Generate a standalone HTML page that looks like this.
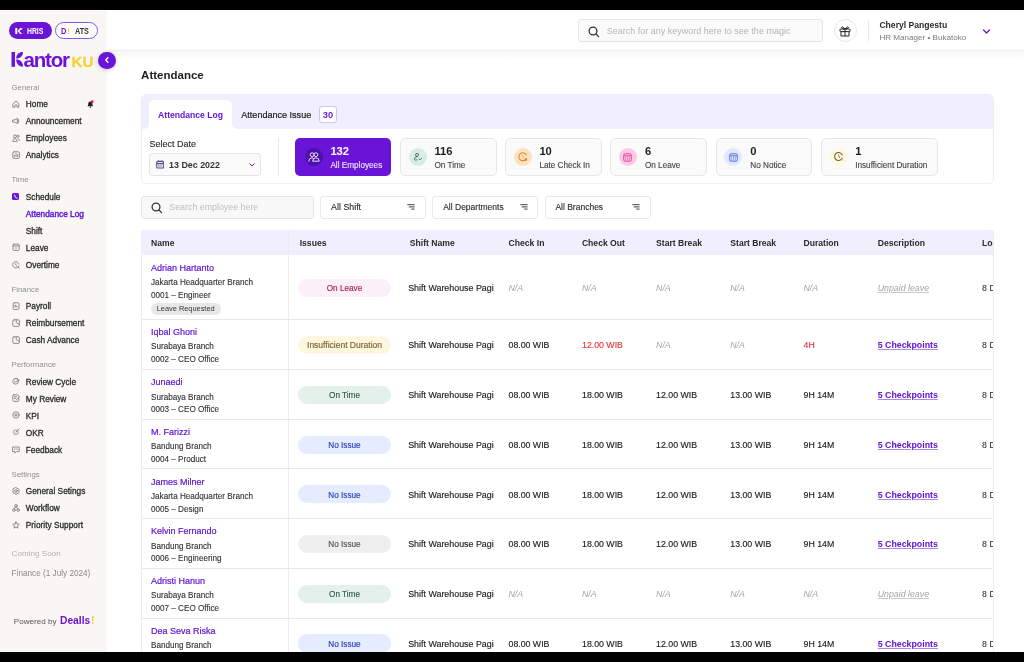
<!DOCTYPE html>
<html><head><meta charset="utf-8">
<style>
*{box-sizing:border-box;margin:0;padding:0}
html,body{width:1024px;height:662px;overflow:hidden;background:#fff;font-family:"Liberation Sans",sans-serif;color:#2b2b2b;position:relative}
.a{position:absolute;white-space:nowrap}
#wrap{position:absolute;left:0;top:0;width:1024px;height:662px;will-change:transform}
</style></head><body><div id="wrap">
<div class="a" style="left:0.00px;top:0.00px;width:1024.00px;height:10.00px;background:#000;z-index:50"></div>
<div class="a" style="left:0.00px;top:652.00px;width:1024.00px;height:10.00px;background:#000;z-index:50"></div>
<div class="a" style="left:0.00px;top:10.00px;width:107.00px;height:642.00px;background:#f8f7f4"></div>
<div class="a" style="left:8.60px;top:22.10px;width:43.20px;height:17.20px;border-radius:9px;background:#6a14d8"></div>
<svg class="a" style="left:15.00px;top:27.50px" width="8" height="7" viewBox="0 0 8 7"><rect x="0.3" y="0" width="2" height="6" fill="#fff"/><path d="M2.6 3 L5.2 0 H7 L4.4 3 L7 6 H5.2 Z" fill="#fff"/><circle cx="6.4" cy="0.9" r="1" fill="#f7d136"/><circle cx="6.8" cy="5.6" r="0.6" fill="#f08a2a"/></svg>
<div class="a" style="left:26.70px;top:26.00px;font-size:8.2px;line-height:12px;font-weight:700;color:#fff;transform:scaleX(0.835);transform-origin:0 0">HRIS</div>
<div class="a" style="left:54.80px;top:22.10px;width:43.00px;height:17.20px;border-radius:9px;border:1px solid #8757e6;background:#fff"></div>
<div class="a" style="left:61.40px;top:25.00px;font-size:8.4px;line-height:12px;font-weight:700;color:#6a14d8;transform:scaleX(0.9);transform-origin:0 0">D</div>
<div class="a" style="left:67.60px;top:27.80px;width:1.20px;height:4.20px;background:#f7c928;border-radius:0.5px"></div>
<div class="a" style="left:67.60px;top:32.70px;width:1.20px;height:1.20px;background:#f7c928"></div>
<div class="a" style="left:74.80px;top:26.00px;font-size:8.2px;line-height:12px;font-weight:700;color:#333;transform:scaleX(0.885);transform-origin:0 0">ATS</div>
<svg class="a" style="left:11.00px;top:51.80px" width="15" height="15" viewBox="0 0 15 15"><rect x="0.5" y="0" width="3.5" height="14.8" fill="#6a14d8"/><path d="M5.2 6.6 C5.2 2.6 7.8 0.1 12 0.1 C12 4.1 9.4 6.6 5.2 6.6 Z" fill="#6a14d8"/><path d="M5.2 7.6 C9.4 7.6 12 10.2 12 14.8 C8 14.8 5.2 11.8 5.2 7.6 Z" fill="#6a14d8"/></svg>
<div class="a" style="left:23.60px;top:48.00px;font-size:20.5px;line-height:24px;font-weight:700;color:#6a14d8;letter-spacing:-1.2px">antor</div>
<div class="a" style="left:71.40px;top:52.00px;font-size:15.2px;line-height:20px;font-weight:700;color:#f7d136;letter-spacing:0.1px;-webkit-text-stroke:0.3px #f7d136">KU</div>
<div class="a" style="left:98.40px;top:51.80px;width:17.20px;height:17.20px;border-radius:50%;background:#6a14d8;box-shadow:0 1px 5px rgba(60,20,120,.22);z-index:10"></div>
<svg class="a" style="left:103px;top:56.3px;z-index:11" width="8" height="8" viewBox="0 0 8 8"><path d="M4.9 1.8 L2.8 4 L4.9 6.2" stroke="#fff" stroke-width="1.4" fill="none" stroke-linecap="round" stroke-linejoin="round"/></svg>
<div class="a" style="left:11.50px;top:82.00px;font-size:7.8px;line-height:12px;font-weight:400;color:#8e8e8e;">General</div>
<div class="a" style="left:25.80px;top:98.00px;font-size:8.3px;line-height:12px;font-weight:400;color:#292929;-webkit-text-stroke:0.28px #292929">Home</div>
<svg class="a" style="left:11.80px;top:99.80px" width="8" height="8" viewBox="0 0 8 8"><path d="M1.2 3.6 L4 1 L6.8 3.6 V7.2 H5 V5.2 Q4 4.4 3 5.2 V7.2 H1.2 Z" stroke="#8c8c8c" stroke-width="1" fill="none" stroke-linecap="round" stroke-linejoin="round"/></svg>
<div class="a" style="left:25.80px;top:115.00px;font-size:8.3px;line-height:12px;font-weight:400;color:#292929;-webkit-text-stroke:0.28px #292929">Announcement</div>
<svg class="a" style="left:11.80px;top:116.85px" width="8" height="8" viewBox="0 0 8 8"><path d="M1 3 H2.6 L5.4 1.4 V6.6 L2.6 5 H1 Z" stroke="#8c8c8c" stroke-width="1" fill="none" stroke-linecap="round" stroke-linejoin="round"/><path d="M6.6 2.6 V5.4" stroke="#8c8c8c" stroke-width="1" fill="none" stroke-linecap="round" stroke-linejoin="round"/></svg>
<div class="a" style="left:25.80px;top:132.00px;font-size:8.3px;line-height:12px;font-weight:400;color:#292929;-webkit-text-stroke:0.28px #292929">Employees</div>
<svg class="a" style="left:11.80px;top:133.90px" width="8" height="8" viewBox="0 0 8 8"><circle cx="3" cy="2.4" r="1.5" stroke="#8c8c8c" stroke-width="1" fill="none" stroke-linecap="round" stroke-linejoin="round"/><path d="M0.8 7.2 Q0.8 4.6 3 4.6 Q5.2 4.6 5.2 7.2 Z" stroke="#8c8c8c" stroke-width="1" fill="none" stroke-linecap="round" stroke-linejoin="round"/><circle cx="5.8" cy="2.2" r="1.1" stroke="#8c8c8c" stroke-width="1" fill="none" stroke-linecap="round" stroke-linejoin="round"/><path d="M6 4.4 Q7.4 4.6 7.4 6.4" stroke="#8c8c8c" stroke-width="1" fill="none" stroke-linecap="round" stroke-linejoin="round"/></svg>
<div class="a" style="left:25.80px;top:149.00px;font-size:8.3px;line-height:12px;font-weight:400;color:#292929;-webkit-text-stroke:0.28px #292929">Analytics</div>
<svg class="a" style="left:11.80px;top:150.95px" width="8" height="8" viewBox="0 0 8 8"><rect x="0.8" y="0.8" width="6.6" height="6.6" rx="1.2" stroke="#8c8c8c" stroke-width="1" fill="none" stroke-linecap="round" stroke-linejoin="round"/><path d="M4 2.4 V5.6 M2.4 4.4 V5.6 M5.6 3.6 V5.6" stroke="#8c8c8c" stroke-width="1" fill="none" stroke-linecap="round" stroke-linejoin="round"/></svg>
<div class="a" style="left:11.50px;top:174.00px;font-size:7.8px;line-height:12px;font-weight:400;color:#8e8e8e;">Time</div>
<div class="a" style="left:25.80px;top:191.00px;font-size:8.3px;line-height:12px;font-weight:400;color:#292929;-webkit-text-stroke:0.28px #292929">Schedule</div>
<div class="a" style="left:12.00px;top:192.80px;width:7.40px;height:7.40px;border-radius:1.6px;background:#6a14d8"></div>
<svg class="a" style="left:12.00px;top:192.80px" width="7.4" height="7.4" viewBox="0 0 7.4 7.4"><path d="M2.6 2 Q2.2 4.6 5.2 5.4" stroke="#fff" stroke-width="0.9" fill="none" stroke-linecap="round"/></svg>
<div class="a" style="left:25.80px;top:208.00px;font-size:8.3px;line-height:12px;font-weight:400;color:#6316d8;-webkit-text-stroke:0.4px #6316d8">Attendance Log</div>
<div class="a" style="left:25.80px;top:225.00px;font-size:8.3px;line-height:12px;font-weight:400;color:#292929;-webkit-text-stroke:0.28px #292929">Shift</div>
<div class="a" style="left:25.80px;top:242.00px;font-size:8.3px;line-height:12px;font-weight:400;color:#292929;-webkit-text-stroke:0.28px #292929">Leave</div>
<svg class="a" style="left:11.80px;top:243.45px" width="8" height="8" viewBox="0 0 8 8"><rect x="1" y="1.2" width="6.2" height="6.2" rx="0.8" stroke="#8c8c8c" stroke-width="1" fill="none" stroke-linecap="round" stroke-linejoin="round"/><path d="M1 3 H7.2 M3.6 5 H4.6" stroke="#8c8c8c" stroke-width="1" fill="none" stroke-linecap="round" stroke-linejoin="round"/></svg>
<div class="a" style="left:25.80px;top:259.00px;font-size:8.3px;line-height:12px;font-weight:400;color:#292929;-webkit-text-stroke:0.28px #292929">Overtime</div>
<svg class="a" style="left:11.80px;top:260.50px" width="8" height="8" viewBox="0 0 8 8"><path d="M6.8 5 A3.2 3.2 0 1 1 7 3.2" stroke="#8c8c8c" stroke-width="1" fill="none" stroke-linecap="round" stroke-linejoin="round"/><path d="M3.8 2.4 V4.2 L5 5" stroke="#8c8c8c" stroke-width="1" fill="none" stroke-linecap="round" stroke-linejoin="round"/><path d="M6.2 6.2 L7.4 7.4" stroke="#8c8c8c" stroke-width="1" fill="none" stroke-linecap="round" stroke-linejoin="round"/></svg>
<div class="a" style="left:11.50px;top:284.00px;font-size:7.8px;line-height:12px;font-weight:400;color:#8e8e8e;">Finance</div>
<div class="a" style="left:25.80px;top:300.00px;font-size:8.3px;line-height:12px;font-weight:400;color:#292929;-webkit-text-stroke:0.28px #292929">Payroll</div>
<svg class="a" style="left:11.80px;top:301.85px" width="8" height="8" viewBox="0 0 8 8"><rect x="1.2" y="0.8" width="5.8" height="6.6" rx="1" stroke="#8c8c8c" stroke-width="1" fill="none" stroke-linecap="round" stroke-linejoin="round"/><path d="M2.8 3.4 H4 M2.8 4.8 H5.4" stroke="#8c8c8c" stroke-width="1" fill="none" stroke-linecap="round" stroke-linejoin="round"/></svg>
<div class="a" style="left:25.80px;top:317.00px;font-size:8.3px;line-height:12px;font-weight:400;color:#292929;-webkit-text-stroke:0.28px #292929">Reimbursement</div>
<svg class="a" style="left:11.80px;top:318.90px" width="8" height="8" viewBox="0 0 8 8"><rect x="0.8" y="0.8" width="6.6" height="6.6" rx="1.2" stroke="#8c8c8c" stroke-width="1" fill="none" stroke-linecap="round" stroke-linejoin="round"/><path d="M4.2 0.8 V3.6 L7.4 5.6" stroke="#8c8c8c" stroke-width="1" fill="none" stroke-linecap="round" stroke-linejoin="round"/></svg>
<div class="a" style="left:25.80px;top:334.00px;font-size:8.3px;line-height:12px;font-weight:400;color:#292929;-webkit-text-stroke:0.28px #292929">Cash Advance</div>
<svg class="a" style="left:11.80px;top:335.95px" width="8" height="8" viewBox="0 0 8 8"><rect x="0.8" y="0.8" width="6.6" height="6.6" rx="1.2" stroke="#8c8c8c" stroke-width="1" fill="none" stroke-linecap="round" stroke-linejoin="round"/><path d="M4.2 0.8 V3.6 L7.4 5.6" stroke="#8c8c8c" stroke-width="1" fill="none" stroke-linecap="round" stroke-linejoin="round"/></svg>
<div class="a" style="left:11.50px;top:359.00px;font-size:7.8px;line-height:12px;font-weight:400;color:#8e8e8e;">Performance</div>
<div class="a" style="left:25.80px;top:376.00px;font-size:8.3px;line-height:12px;font-weight:400;color:#292929;-webkit-text-stroke:0.28px #292929">Review Cycle</div>
<svg class="a" style="left:11.80px;top:377.30px" width="8" height="8" viewBox="0 0 8 8"><circle cx="3.6" cy="4.4" r="2.8" stroke="#8c8c8c" stroke-width="1" fill="none" stroke-linecap="round" stroke-linejoin="round"/><path d="M3 1.4 A3 3 0 0 1 7.2 3.6" stroke="#8c8c8c" stroke-width="1" fill="none" stroke-linecap="round" stroke-linejoin="round"/><path d="M2.4 4.6 L3.4 5.4 L5 3.8" stroke="#8c8c8c" stroke-width="1" fill="none" stroke-linecap="round" stroke-linejoin="round"/></svg>
<div class="a" style="left:25.80px;top:393.00px;font-size:8.3px;line-height:12px;font-weight:400;color:#292929;-webkit-text-stroke:0.28px #292929">My Review</div>
<svg class="a" style="left:11.80px;top:394.35px" width="8" height="8" viewBox="0 0 8 8"><rect x="0.8" y="0.8" width="6" height="6.6" rx="1" stroke="#8c8c8c" stroke-width="1" fill="none" stroke-linecap="round" stroke-linejoin="round"/><path d="M2.4 2.8 H4.6 M2.4 4.4 H3.6 M4.2 6 L7.2 3" stroke="#8c8c8c" stroke-width="1" fill="none" stroke-linecap="round" stroke-linejoin="round"/></svg>
<div class="a" style="left:25.80px;top:410.00px;font-size:8.3px;line-height:12px;font-weight:400;color:#292929;-webkit-text-stroke:0.28px #292929">KPI</div>
<svg class="a" style="left:11.80px;top:411.40px" width="8" height="8" viewBox="0 0 8 8"><circle cx="4" cy="4" r="3.2" stroke="#8c8c8c" stroke-width="1" fill="none" stroke-linecap="round" stroke-linejoin="round"/><path d="M4 2.6 V5.4 M2.6 4 H5.4" stroke="#8c8c8c" stroke-width="1" fill="none" stroke-linecap="round" stroke-linejoin="round"/></svg>
<div class="a" style="left:25.80px;top:427.00px;font-size:8.3px;line-height:12px;font-weight:400;color:#292929;-webkit-text-stroke:0.28px #292929">OKR</div>
<svg class="a" style="left:11.80px;top:428.45px" width="8" height="8" viewBox="0 0 8 8"><circle cx="3.8" cy="4.2" r="3" fill="#8c8c8c" opacity="0.55"/><circle cx="3.8" cy="4.2" r="1.4" fill="#f8f7f4"/><path d="M4 4 L7.2 0.8" stroke="#8c8c8c" stroke-width="1" fill="none" stroke-linecap="round" stroke-linejoin="round"/></svg>
<div class="a" style="left:25.80px;top:444.00px;font-size:8.3px;line-height:12px;font-weight:400;color:#292929;-webkit-text-stroke:0.28px #292929">Feedback</div>
<svg class="a" style="left:11.80px;top:445.50px" width="8" height="8" viewBox="0 0 8 8"><path d="M0.8 1 H7.2 V5.6 H4.6 L3 7.2 V5.6 H0.8 Z" stroke="#8c8c8c" stroke-width="1" fill="none" stroke-linecap="round" stroke-linejoin="round"/><path d="M2.8 2.8 V3.6 M5 2.8 V3.6" stroke="#8c8c8c" stroke-width="1" fill="none" stroke-linecap="round" stroke-linejoin="round"/></svg>
<div class="a" style="left:11.50px;top:469.00px;font-size:7.8px;line-height:12px;font-weight:400;color:#8e8e8e;">Settings</div>
<div class="a" style="left:25.80px;top:485.00px;font-size:8.3px;line-height:12px;font-weight:400;color:#292929;-webkit-text-stroke:0.28px #292929">General Setings</div>
<svg class="a" style="left:11.80px;top:486.85px" width="8" height="8" viewBox="0 0 8 8"><path d="M4 0.6 L7 2.3 V5.7 L4 7.4 L1 5.7 V2.3 Z" stroke="#8c8c8c" stroke-width="1" fill="none" stroke-linecap="round" stroke-linejoin="round"/><circle cx="4" cy="4" r="1.3" stroke="#8c8c8c" stroke-width="1" fill="none" stroke-linecap="round" stroke-linejoin="round"/></svg>
<div class="a" style="left:25.80px;top:502.00px;font-size:8.3px;line-height:12px;font-weight:400;color:#292929;-webkit-text-stroke:0.28px #292929">Workflow</div>
<svg class="a" style="left:11.80px;top:503.90px" width="8" height="8" viewBox="0 0 8 8"><circle cx="4" cy="1.8" r="1.3" stroke="#8c8c8c" stroke-width="1" fill="none" stroke-linecap="round" stroke-linejoin="round"/><circle cx="1.9" cy="6" r="1.3" stroke="#8c8c8c" stroke-width="1" fill="none" stroke-linecap="round" stroke-linejoin="round"/><circle cx="6.1" cy="6" r="1.3" stroke="#8c8c8c" stroke-width="1" fill="none" stroke-linecap="round" stroke-linejoin="round"/><path d="M3.3 2.9 L2.4 4.8 M4.7 2.9 L5.6 4.8" stroke="#8c8c8c" stroke-width="1" fill="none" stroke-linecap="round" stroke-linejoin="round"/></svg>
<div class="a" style="left:25.80px;top:519.00px;font-size:8.3px;line-height:12px;font-weight:400;color:#292929;-webkit-text-stroke:0.28px #292929">Priority Support</div>
<svg class="a" style="left:11.80px;top:520.95px" width="8" height="8" viewBox="0 0 8 8"><path d="M4 0.8 L5 3 L7.3 3.2 L5.5 4.8 L6 7.2 L4 6 L2 7.2 L2.5 4.8 L0.7 3.2 L3 3 Z" stroke="#8c8c8c" stroke-width="1" fill="none" stroke-linecap="round" stroke-linejoin="round"/></svg>
<svg class="a" style="left:86.60px;top:99.60px" width="7.5" height="8.4" viewBox="0 0 7.5 8.4"><path d="M0.4 6.2 Q1.2 5.6 1.2 3.8 Q1.2 1.5 3.3 1.5 Q5.4 1.5 5.4 3.8 Q5.4 5.6 6.2 6.2 Z" fill="#232323"/><rect x="2.6" y="6.3" width="1.4" height="1.6" rx="0.6" fill="#444"/><circle cx="5.2" cy="1.7" r="1.45" fill="#e02020"/></svg>
<div class="a" style="left:11.60px;top:548.00px;font-size:8.1px;line-height:12px;font-weight:400;color:#b3b3b3;">Coming Soon</div>
<div class="a" style="left:11.60px;top:568.00px;font-size:8.2px;line-height:12px;font-weight:400;color:#8a8a8a;">Finance (1 July 2024)</div>
<div class="a" style="left:13.80px;top:616.00px;font-size:8.1px;line-height:12px;font-weight:400;color:#555;">Powered by</div>
<div class="a" style="left:60.00px;top:614.00px;font-size:10.25px;line-height:14px;font-weight:700;color:#6a14d8;">Dealls</div>
<div class="a" style="left:91.00px;top:614.00px;font-size:10.25px;line-height:14px;font-weight:700;color:#f7c928;">!</div>
<div class="a" style="left:107.00px;top:10.00px;width:917.00px;height:40.00px;background:#fff"></div>
<div class="a" style="left:107.00px;top:50.00px;width:917.00px;height:1.00px;background:#efefef"></div>
<div class="a" style="left:107.00px;top:51.00px;width:917.00px;height:8.00px;background:linear-gradient(#f6f6f6,rgba(255,255,255,0))"></div>
<div class="a" style="left:577.60px;top:19.40px;width:245.00px;height:23.00px;border:1px solid #e2e5ea;border-radius:3px;background:#fafafa"></div>
<svg class="a" style="left:587.50px;top:25.50px" width="12" height="12" viewBox="0 0 12 12"><circle cx="5" cy="5" r="3.9" stroke="#333" stroke-width="1.3" fill="none"/><path d="M8 8 L10.6 10.6" stroke="#333" stroke-width="1.3" stroke-linecap="round"/></svg>
<div class="a" style="left:606.80px;top:25.00px;font-size:9.0px;line-height:12px;font-weight:400;color:#b5b5b5;">Search for any keyword here to see the magic</div>
<div class="a" style="left:833.60px;top:19.30px;width:23.00px;height:23.00px;border-radius:50%;border:1px solid #e1e6ee;background:#fff"></div>
<svg class="a" style="left:839.00px;top:24.50px" width="12" height="12" viewBox="0 0 12 12"><rect x="1" y="4" width="10" height="2.6" stroke="#222" stroke-width="1" fill="none" rx="0.5"/><path d="M2 6.6 V11 H10 V6.6 M6 4 V11" stroke="#222" stroke-width="1" fill="none"/><path d="M6 4 Q3 0.5 2.6 2.6 Q2.6 4 6 4 Q9.4 4 9.4 2.6 Q9 0.5 6 4" stroke="#222" stroke-width="1" fill="none"/></svg>
<div class="a" style="left:868.00px;top:19.70px;width:1.00px;height:21.50px;background:#e8e8e8"></div>
<div class="a" style="left:879.40px;top:19.00px;font-size:8.6px;line-height:12px;font-weight:700;color:#2b2b2b;">Cheryl Pangestu</div>
<div class="a" style="left:879.40px;top:32.00px;font-size:8.1px;line-height:12px;font-weight:400;color:#7c7c7c;">HR Manager • Bukatoko</div>
<svg class="a" style="left:981.50px;top:27.50px" width="9" height="7" viewBox="0 0 9 7"><path d="M1.5 2 L4.5 5 L7.5 2" stroke="#6a14d8" stroke-width="1.3" fill="none" stroke-linecap="round" stroke-linejoin="round"/></svg>
<div class="a" style="left:141.10px;top:68.00px;font-size:11.5px;line-height:14px;font-weight:700;color:#1f1f1f;">Attendance</div>
<div class="a" style="left:141.00px;top:94.00px;width:852.80px;height:90.00px;border:1px solid #ededf0;border-radius:5px;background:#fff;overflow:hidden"></div>
<div class="a" style="left:141.50px;top:94.50px;width:851.80px;height:10.00px;background:#f1effd;border-radius:4.5px 4.5px 0 0"></div>
<div class="a" style="left:142.00px;top:99.50px;width:7.30px;height:29.70px;background:#f1effd;border-radius:0 0 5px 0"></div>
<div class="a" style="left:232.30px;top:99.50px;width:761.00px;height:29.70px;background:#f1effd;border-radius:0 0 0 5px"></div>
<div class="a" style="left:149.30px;top:99.80px;width:83.00px;height:29.40px;background:#fff;border-radius:5px 5px 0 0"></div>
<div class="a" style="left:158.10px;top:109.00px;font-size:8.6px;line-height:12px;font-weight:700;color:#6216d6;">Attendance Log</div>
<div class="a" style="left:241.30px;top:109.00px;font-size:9.05px;line-height:12px;font-weight:400;color:#222;-webkit-text-stroke:0.2px #222">Attendance Issue</div>
<div class="a" style="left:319.00px;top:106.20px;width:18.00px;height:17.20px;border:1px solid #cfc4f5;border-radius:3px;background:#fff"></div>
<div class="a" style="left:319.00px;top:109.00px;font-size:9.3px;line-height:12px;font-weight:700;color:#6a1fd8;width:18px;text-align:center">30</div>
<div class="a" style="left:149.40px;top:138.00px;font-size:9.0px;line-height:12px;font-weight:400;color:#2a2a2a;-webkit-text-stroke:0.12px #2a2a2a">Select Date</div>
<div class="a" style="left:149.00px;top:153.10px;width:111.80px;height:22.60px;border:1px solid #e5e5e5;border-radius:3px;background:#fafafa"></div>
<svg class="a" style="left:155.80px;top:160.40px" width="8.4" height="8.6" viewBox="0 0 8.4 8.6"><rect x="0.7" y="1.4" width="7" height="6.6" rx="1" stroke="#5b4a8a" stroke-width="1.1" fill="none"/><path d="M0.7 3.6 H7.7" stroke="#5b4a8a" stroke-width="1.3"/><path d="M2.6 0.3 V2 M5.8 0.3 V2" stroke="#5b4a8a" stroke-width="0.9"/><rect x="2" y="4.6" width="4.4" height="2.4" fill="#5b4a8a" opacity="0.35"/></svg>
<div class="a" style="left:169.10px;top:159.00px;font-size:8.9px;line-height:12px;font-weight:700;color:#333;">13 Dec 2022</div>
<svg class="a" style="left:248.50px;top:162.50px" width="6" height="4" viewBox="0 0 6 4"><path d="M0.8 0.8 L3 3 L5.2 0.8" stroke="#6a14d8" stroke-width="1" fill="none" stroke-linecap="round" stroke-linejoin="round"/></svg>
<div class="a" style="left:278.00px;top:138.30px;width:1.00px;height:37.40px;background:#e8e8e8"></div>
<div class="a" style="left:295.00px;top:138.30px;width:96.40px;height:37.40px;border-radius:5px;background:#6a14d8"></div>
<div class="a" style="left:304.90px;top:148.00px;width:18.20px;height:18.20px;border-radius:50%;background:#4f10a8"></div>
<svg class="a" style="left:308.00px;top:152.10px" width="12" height="10" viewBox="0 0 12 10"><circle cx="4.1" cy="2.7" r="1.9" stroke="#eadfff" stroke-width="1" fill="none"/><circle cx="7.9" cy="2.7" r="1.9" stroke="#eadfff" stroke-width="1" fill="none"/><path d="M0.8 9.2 Q0.8 5.8 4 5.8 Q5.2 5.8 5.8 6.6" stroke="#eadfff" stroke-width="1" fill="none" stroke-linecap="round"/><path d="M4.6 9.2 Q4.6 5.8 7.9 5.8 Q11.2 5.8 11.2 9.2 Z" stroke="#eadfff" stroke-width="1" fill="none" stroke-linejoin="round"/></svg>
<div class="a" style="left:330.40px;top:144.00px;font-size:11.2px;line-height:14px;font-weight:700;color:#fff;">132</div>
<div class="a" style="left:330.40px;top:160.00px;font-size:8.2px;line-height:12px;font-weight:400;color:#f0e8ff;-webkit-text-stroke:0.12px #f0e8ff">All Employees</div>
<div class="a" style="left:400.10px;top:138.30px;width:96.60px;height:37.40px;border:1px solid #e6e6e6;border-radius:5px;background:#fafafa"></div>
<div class="a" style="left:408.70px;top:148.00px;width:18.20px;height:18.20px;border-radius:50%;background:#d5ede3"></div>
<svg class="a" style="left:412.80px;top:153.10px" width="10" height="8" viewBox="0 0 10 8"><circle cx="4" cy="1.9" r="1.5" stroke="#3c6b55" stroke-width="0.9" fill="none"/><path d="M4 3.6 Q1 4.4 1.4 6.4 Q2 7.6 4 7 M6 6 L7 6.8 L8.6 5.2" stroke="#3c6b55" stroke-width="0.9" fill="none" stroke-linecap="round"/></svg>
<div class="a" style="left:434.40px;top:144.00px;font-size:11.2px;line-height:14px;font-weight:700;color:#1f1f1f;">116</div>
<div class="a" style="left:434.40px;top:160.00px;font-size:8.2px;line-height:12px;font-weight:400;color:#444;-webkit-text-stroke:0.12px #444">On Time</div>
<div class="a" style="left:505.20px;top:138.30px;width:96.40px;height:37.40px;border:1px solid #e6e6e6;border-radius:5px;background:#fafafa"></div>
<div class="a" style="left:513.80px;top:148.00px;width:18.20px;height:18.20px;border-radius:50%;background:#fde3bd"></div>
<svg class="a" style="left:518.20px;top:152.20px" width="10" height="10" viewBox="0 0 10 10"><path d="M8.6 6.2 A4 4 0 1 1 8.6 3.4" stroke="#d9882c" stroke-width="1.1" fill="none"/><path d="M4.6 2.6 Q4.6 4.8 6.2 6.4" stroke="#e8b050" stroke-width="1" fill="none"/><rect x="6.8" y="6.6" width="2" height="2" fill="#d07a20"/></svg>
<div class="a" style="left:539.40px;top:144.00px;font-size:11.2px;line-height:14px;font-weight:700;color:#1f1f1f;">10</div>
<div class="a" style="left:539.40px;top:160.00px;font-size:8.2px;line-height:12px;font-weight:400;color:#444;-webkit-text-stroke:0.12px #444">Late Check In</div>
<div class="a" style="left:610.20px;top:138.30px;width:96.40px;height:37.40px;border:1px solid #e6e6e6;border-radius:5px;background:#fafafa"></div>
<div class="a" style="left:618.80px;top:148.00px;width:18.20px;height:18.20px;border-radius:50%;background:#fcc9e8"></div>
<svg class="a" style="left:623.40px;top:152.60px" width="9" height="9" viewBox="0 0 9 9"><rect x="0.7" y="0.8" width="7.6" height="7.4" rx="1.3" stroke="#df4f98" stroke-width="1" fill="none"/><path d="M0.7 2.8 H8.3" stroke="#df4f98" stroke-width="1"/><path d="M2.6 3.4 V7.6 M4.5 3.4 V7.6 M6.4 3.4 V7.6" stroke="#df4f98" stroke-width="0.7" opacity="0.8"/></svg>
<div class="a" style="left:644.90px;top:144.00px;font-size:11.2px;line-height:14px;font-weight:700;color:#1f1f1f;">6</div>
<div class="a" style="left:644.90px;top:160.00px;font-size:8.2px;line-height:12px;font-weight:400;color:#444;-webkit-text-stroke:0.12px #444">On Leave</div>
<div class="a" style="left:715.70px;top:138.30px;width:96.30px;height:37.40px;border:1px solid #e6e6e6;border-radius:5px;background:#fafafa"></div>
<div class="a" style="left:724.30px;top:148.00px;width:18.20px;height:18.20px;border-radius:50%;background:#e1e8fd"></div>
<svg class="a" style="left:728.90px;top:152.60px" width="9" height="9" viewBox="0 0 9 9"><rect x="0.7" y="0.8" width="7.6" height="7.4" rx="1.3" stroke="#5a76d6" stroke-width="1" fill="none"/><path d="M0.7 2.8 H8.3" stroke="#5a76d6" stroke-width="1"/><path d="M2.6 3.4 V7.6 M4.5 3.4 V7.6 M6.4 3.4 V7.6" stroke="#5a76d6" stroke-width="0.7" opacity="0.8"/></svg>
<div class="a" style="left:750.30px;top:144.00px;font-size:11.2px;line-height:14px;font-weight:700;color:#1f1f1f;">0</div>
<div class="a" style="left:750.30px;top:160.00px;font-size:8.2px;line-height:12px;font-weight:400;color:#444;-webkit-text-stroke:0.12px #444">No Notice</div>
<div class="a" style="left:821.00px;top:138.30px;width:116.90px;height:37.40px;border:1px solid #e6e6e6;border-radius:5px;background:#fafafa"></div>
<div class="a" style="left:829.60px;top:148.00px;width:18.20px;height:18.20px;border-radius:50%;background:#fdf8e3"></div>
<svg class="a" style="left:833.90px;top:152.20px" width="10" height="10" viewBox="0 0 10 10"><path d="M8.4 5.8 A4 4 0 1 1 8.4 3.2" stroke="#7f6c2c" stroke-width="1.1" fill="none"/><path d="M4.6 2.6 Q4.4 4.6 5.8 6" stroke="#7f6c2c" stroke-width="0.9" fill="none"/><path d="M7.8 6.2 V8.6" stroke="#b9a868" stroke-width="0.9"/></svg>
<div class="a" style="left:855.20px;top:144.00px;font-size:11.2px;line-height:14px;font-weight:700;color:#1f1f1f;">1</div>
<div class="a" style="left:855.20px;top:160.00px;font-size:8.2px;line-height:12px;font-weight:400;color:#444;-webkit-text-stroke:0.12px #444">Insufficient Duration</div>
<div class="a" style="left:141.00px;top:196.30px;width:173.00px;height:22.30px;border:1px solid #e6e6e6;border-radius:3px;background:#f8f8f8"></div>
<svg class="a" style="left:150.50px;top:201.80px" width="12" height="12" viewBox="0 0 12 12"><circle cx="5" cy="5" r="3.9" stroke="#333" stroke-width="1.3" fill="none"/><path d="M8 8 L10.6 10.6" stroke="#333" stroke-width="1.3" stroke-linecap="round"/></svg>
<div class="a" style="left:169.30px;top:201.00px;font-size:8.85px;line-height:12px;font-weight:400;color:#bdbdbd;">Search employee here</div>
<div class="a" style="left:320.20px;top:196.30px;width:106.20px;height:22.30px;border:1px solid #e8e8e8;border-radius:3px;background:#fff"></div>
<div class="a" style="left:331.10px;top:201.00px;font-size:8.85px;line-height:12px;font-weight:400;color:#2a2a2a;-webkit-text-stroke:0.12px #2a2a2a">All Shift</div>
<svg class="a" style="left:407.40px;top:204.30px" width="8" height="6" viewBox="0 0 8 6"><path d="M0.3 0.7 H7.6 M1.8 2.9 H7.6 M4.2 5.1 H7.6" stroke="#444" stroke-width="1"/></svg>
<div class="a" style="left:432.30px;top:196.30px;width:106.20px;height:22.30px;border:1px solid #e8e8e8;border-radius:3px;background:#fff"></div>
<div class="a" style="left:443.20px;top:201.00px;font-size:8.5px;line-height:12px;font-weight:400;color:#2a2a2a;-webkit-text-stroke:0.12px #2a2a2a">All Departments</div>
<svg class="a" style="left:519.50px;top:204.30px" width="8" height="6" viewBox="0 0 8 6"><path d="M0.3 0.7 H7.6 M1.8 2.9 H7.6 M4.2 5.1 H7.6" stroke="#444" stroke-width="1"/></svg>
<div class="a" style="left:544.50px;top:196.30px;width:106.20px;height:22.30px;border:1px solid #e8e8e8;border-radius:3px;background:#fff"></div>
<div class="a" style="left:555.40px;top:201.00px;font-size:8.5px;line-height:12px;font-weight:400;color:#2a2a2a;-webkit-text-stroke:0.12px #2a2a2a">All Branches</div>
<svg class="a" style="left:631.70px;top:204.30px" width="8" height="6" viewBox="0 0 8 6"><path d="M0.3 0.7 H7.6 M1.8 2.9 H7.6 M4.2 5.1 H7.6" stroke="#444" stroke-width="1"/></svg>
<div class="a" style="left:141.00px;top:230.00px;width:853.00px;height:430.00px;border:1px solid #ececec;border-radius:2px 2px 0 0;overflow:hidden;background:#fff"></div>
<div class="a" style="left:141.00px;top:230.00px;width:852.00px;height:25.20px;background:#f1effd;border-radius:2px 2px 0 0"></div>
<div class="a" style="left:288.30px;top:231.00px;width:1.00px;height:421.00px;background:#ececec"></div>
<div class="a" style="left:151.10px;top:237.00px;font-size:8.6px;line-height:12px;font-weight:700;color:#2a2a2a;">Name</div>
<div class="a" style="left:299.70px;top:237.00px;font-size:8.6px;line-height:12px;font-weight:700;color:#2a2a2a;">Issues</div>
<div class="a" style="left:409.80px;top:237.00px;font-size:8.6px;line-height:12px;font-weight:700;color:#2a2a2a;">Shift Name</div>
<div class="a" style="left:508.60px;top:237.00px;font-size:8.6px;line-height:12px;font-weight:700;color:#2a2a2a;">Check In</div>
<div class="a" style="left:581.90px;top:237.00px;font-size:8.6px;line-height:12px;font-weight:700;color:#2a2a2a;">Check Out</div>
<div class="a" style="left:656.10px;top:237.00px;font-size:8.6px;line-height:12px;font-weight:700;color:#2a2a2a;">Start Break</div>
<div class="a" style="left:730.30px;top:237.00px;font-size:8.6px;line-height:12px;font-weight:700;color:#2a2a2a;">Start Break</div>
<div class="a" style="left:803.50px;top:237.00px;font-size:8.6px;line-height:12px;font-weight:700;color:#2a2a2a;">Duration</div>
<div class="a" style="left:877.70px;top:237.00px;font-size:8.6px;line-height:12px;font-weight:700;color:#2a2a2a;">Description</div>
<div class="a" style="left:982.10px;top:237.00px;font-size:8.6px;line-height:12px;font-weight:700;color:#2a2a2a;width:11.2px;overflow:hidden">Log</div>
<div class="a" style="left:151.00px;top:262.00px;font-size:9.0px;line-height:12px;font-weight:400;color:#6216d6;-webkit-text-stroke:0.2px #6216d6">Adrian Hartanto</div>
<div class="a" style="left:151.00px;top:277.00px;font-size:8.15px;line-height:12px;font-weight:400;color:#333;-webkit-text-stroke:0.12px #333">Jakarta Headquarter Branch</div>
<div class="a" style="left:151.00px;top:290.00px;font-size:8.15px;line-height:12px;font-weight:400;color:#333;-webkit-text-stroke:0.12px #333">0001 – Engineer</div>
<div class="a" style="left:151.00px;top:302.50px;width:69.70px;height:12.00px;border-radius:6px;background:#e7e7e7"></div>
<div class="a" style="left:156.70px;top:303.00px;font-size:7.4px;line-height:12px;font-weight:400;color:#333;">Leave Requested</div>
<div class="a" style="left:298.00px;top:278.75px;width:93.00px;height:18.20px;border-radius:9px;background:#fdeff9"></div>
<div class="a" style="left:298.00px;top:283.00px;font-size:8.2px;line-height:12px;font-weight:400;color:#a8235a;width:93px;text-align:center;-webkit-text-stroke:0.15px #a8235a">On Leave</div>
<div class="a" style="left:408.20px;top:282.00px;font-size:8.9px;line-height:12px;font-weight:400;color:#222;width:86px;overflow:hidden;-webkit-text-stroke:0.15px #222">Shift Warehouse Pagi</div>
<div class="a" style="left:508.50px;top:282.00px;font-size:8.76px;line-height:12px;font-weight:400;color:#a3a3a3;font-style:italic">N/A</div>
<div class="a" style="left:582.00px;top:282.00px;font-size:8.76px;line-height:12px;font-weight:400;color:#a3a3a3;font-style:italic">N/A</div>
<div class="a" style="left:656.10px;top:282.00px;font-size:8.76px;line-height:12px;font-weight:400;color:#a3a3a3;font-style:italic">N/A</div>
<div class="a" style="left:730.30px;top:282.00px;font-size:8.76px;line-height:12px;font-weight:400;color:#a3a3a3;font-style:italic">N/A</div>
<div class="a" style="left:803.50px;top:282.00px;font-size:8.76px;line-height:12px;font-weight:400;color:#a3a3a3;font-style:italic">N/A</div>
<div class="a" style="left:877.70px;top:282.00px;font-size:8.8px;line-height:12px;font-weight:400;color:#a3a3a3;font-style:italic;text-decoration:underline;text-decoration-color:#c8c8c8">Unpaid leave</div>
<div class="a" style="left:982.10px;top:282.00px;font-size:8.8px;line-height:12px;font-weight:400;color:#222;width:10.9px;overflow:hidden">8 Days</div>
<div class="a" style="left:142.00px;top:318.80px;width:850.00px;height:1.00px;background:#e8e8e8"></div>
<div class="a" style="left:151.00px;top:326.00px;font-size:9.0px;line-height:12px;font-weight:400;color:#6216d6;-webkit-text-stroke:0.2px #6216d6">Iqbal Ghoni</div>
<div class="a" style="left:151.00px;top:341.00px;font-size:8.15px;line-height:12px;font-weight:400;color:#333;-webkit-text-stroke:0.12px #333">Surabaya Branch</div>
<div class="a" style="left:151.00px;top:354.00px;font-size:8.15px;line-height:12px;font-weight:400;color:#333;-webkit-text-stroke:0.12px #333">0002 – CEO Office</div>
<div class="a" style="left:298.00px;top:335.90px;width:93.00px;height:18.20px;border-radius:9px;background:#fdf6e0"></div>
<div class="a" style="left:298.00px;top:339.00px;font-size:8.5px;line-height:12px;font-weight:400;color:#7b6528;width:93px;text-align:center;-webkit-text-stroke:0.15px #7b6528">Insufficient Duration</div>
<div class="a" style="left:408.20px;top:339.00px;font-size:8.9px;line-height:12px;font-weight:400;color:#222;width:86px;overflow:hidden;-webkit-text-stroke:0.15px #222">Shift Warehouse Pagi</div>
<div class="a" style="left:508.50px;top:339.00px;font-size:8.78px;line-height:12px;font-weight:400;color:#222;-webkit-text-stroke:0.15px #222">08.00 WIB</div>
<div class="a" style="left:582.00px;top:339.00px;font-size:8.78px;line-height:12px;font-weight:400;color:#e0333a;-webkit-text-stroke:0.12px #e0333a">12.00 WIB</div>
<div class="a" style="left:656.10px;top:339.00px;font-size:8.76px;line-height:12px;font-weight:400;color:#a3a3a3;font-style:italic">N/A</div>
<div class="a" style="left:730.30px;top:339.00px;font-size:8.76px;line-height:12px;font-weight:400;color:#a3a3a3;font-style:italic">N/A</div>
<div class="a" style="left:803.50px;top:339.00px;font-size:8.78px;line-height:12px;font-weight:400;color:#e0333a;-webkit-text-stroke:0.12px #e0333a">4H</div>
<div class="a" style="left:877.70px;top:339.00px;font-size:8.82px;line-height:12px;font-weight:700;color:#6216d6;text-decoration:underline;text-decoration-color:#a98ae8">5 Checkpoints</div>
<div class="a" style="left:982.10px;top:339.00px;font-size:8.8px;line-height:12px;font-weight:400;color:#222;width:10.9px;overflow:hidden">8 Days</div>
<div class="a" style="left:142.00px;top:369.00px;width:850.00px;height:1.00px;background:#e8e8e8"></div>
<div class="a" style="left:151.00px;top:376.00px;font-size:9.0px;line-height:12px;font-weight:400;color:#6216d6;-webkit-text-stroke:0.2px #6216d6">Junaedi</div>
<div class="a" style="left:151.00px;top:392.00px;font-size:8.15px;line-height:12px;font-weight:400;color:#333;-webkit-text-stroke:0.12px #333">Surabaya Branch</div>
<div class="a" style="left:151.00px;top:404.00px;font-size:8.15px;line-height:12px;font-weight:400;color:#333;-webkit-text-stroke:0.12px #333">0003 – CEO Office</div>
<div class="a" style="left:298.00px;top:385.85px;width:93.00px;height:18.20px;border-radius:9px;background:#e3f1ea"></div>
<div class="a" style="left:298.00px;top:390.00px;font-size:8.2px;line-height:12px;font-weight:400;color:#2f5d45;width:93px;text-align:center;-webkit-text-stroke:0.15px #2f5d45">On Time</div>
<div class="a" style="left:408.20px;top:389.00px;font-size:8.9px;line-height:12px;font-weight:400;color:#222;width:86px;overflow:hidden;-webkit-text-stroke:0.15px #222">Shift Warehouse Pagi</div>
<div class="a" style="left:508.50px;top:389.00px;font-size:8.78px;line-height:12px;font-weight:400;color:#222;-webkit-text-stroke:0.15px #222">08.00 WIB</div>
<div class="a" style="left:582.00px;top:389.00px;font-size:8.78px;line-height:12px;font-weight:400;color:#222;-webkit-text-stroke:0.15px #222">18.00 WIB</div>
<div class="a" style="left:656.10px;top:389.00px;font-size:8.78px;line-height:12px;font-weight:400;color:#222;-webkit-text-stroke:0.15px #222">12.00 WIB</div>
<div class="a" style="left:730.30px;top:389.00px;font-size:8.78px;line-height:12px;font-weight:400;color:#222;-webkit-text-stroke:0.15px #222">13.00 WIB</div>
<div class="a" style="left:803.50px;top:389.00px;font-size:8.78px;line-height:12px;font-weight:400;color:#222;-webkit-text-stroke:0.15px #222">9H 14M</div>
<div class="a" style="left:877.70px;top:389.00px;font-size:8.82px;line-height:12px;font-weight:700;color:#6216d6;text-decoration:underline;text-decoration-color:#a98ae8">5 Checkpoints</div>
<div class="a" style="left:982.10px;top:389.00px;font-size:8.8px;line-height:12px;font-weight:400;color:#222;width:10.9px;overflow:hidden">8 Days</div>
<div class="a" style="left:142.00px;top:418.70px;width:850.00px;height:1.00px;background:#e8e8e8"></div>
<div class="a" style="left:151.00px;top:426.00px;font-size:9.0px;line-height:12px;font-weight:400;color:#6216d6;-webkit-text-stroke:0.2px #6216d6">M. Farizzi</div>
<div class="a" style="left:151.00px;top:441.00px;font-size:8.15px;line-height:12px;font-weight:400;color:#333;-webkit-text-stroke:0.12px #333">Bandung Branch</div>
<div class="a" style="left:151.00px;top:454.00px;font-size:8.15px;line-height:12px;font-weight:400;color:#333;-webkit-text-stroke:0.12px #333">0004 – Product</div>
<div class="a" style="left:298.00px;top:435.55px;width:93.00px;height:18.20px;border-radius:9px;background:#e5ecfd"></div>
<div class="a" style="left:298.00px;top:440.00px;font-size:8.2px;line-height:12px;font-weight:400;color:#2b40bd;width:93px;text-align:center;-webkit-text-stroke:0.15px #2b40bd">No Issue</div>
<div class="a" style="left:408.20px;top:439.00px;font-size:8.9px;line-height:12px;font-weight:400;color:#222;width:86px;overflow:hidden;-webkit-text-stroke:0.15px #222">Shift Warehouse Pagi</div>
<div class="a" style="left:508.50px;top:439.00px;font-size:8.78px;line-height:12px;font-weight:400;color:#222;-webkit-text-stroke:0.15px #222">08.00 WIB</div>
<div class="a" style="left:582.00px;top:439.00px;font-size:8.78px;line-height:12px;font-weight:400;color:#222;-webkit-text-stroke:0.15px #222">18.00 WIB</div>
<div class="a" style="left:656.10px;top:439.00px;font-size:8.78px;line-height:12px;font-weight:400;color:#222;-webkit-text-stroke:0.15px #222">12.00 WIB</div>
<div class="a" style="left:730.30px;top:439.00px;font-size:8.78px;line-height:12px;font-weight:400;color:#222;-webkit-text-stroke:0.15px #222">13.00 WIB</div>
<div class="a" style="left:803.50px;top:439.00px;font-size:8.78px;line-height:12px;font-weight:400;color:#222;-webkit-text-stroke:0.15px #222">9H 14M</div>
<div class="a" style="left:877.70px;top:439.00px;font-size:8.82px;line-height:12px;font-weight:700;color:#6216d6;text-decoration:underline;text-decoration-color:#a98ae8">5 Checkpoints</div>
<div class="a" style="left:982.10px;top:439.00px;font-size:8.8px;line-height:12px;font-weight:400;color:#222;width:10.9px;overflow:hidden">8 Days</div>
<div class="a" style="left:142.00px;top:468.40px;width:850.00px;height:1.00px;background:#e8e8e8"></div>
<div class="a" style="left:151.00px;top:476.00px;font-size:9.0px;line-height:12px;font-weight:400;color:#6216d6;-webkit-text-stroke:0.2px #6216d6">James Milner</div>
<div class="a" style="left:151.00px;top:491.00px;font-size:8.15px;line-height:12px;font-weight:400;color:#333;-webkit-text-stroke:0.12px #333">Jakarta Headquarter Branch</div>
<div class="a" style="left:151.00px;top:504.00px;font-size:8.15px;line-height:12px;font-weight:400;color:#333;-webkit-text-stroke:0.12px #333">0005 – Design</div>
<div class="a" style="left:298.00px;top:485.25px;width:93.00px;height:18.20px;border-radius:9px;background:#e5ecfd"></div>
<div class="a" style="left:298.00px;top:490.00px;font-size:8.2px;line-height:12px;font-weight:400;color:#2b40bd;width:93px;text-align:center;-webkit-text-stroke:0.15px #2b40bd">No Issue</div>
<div class="a" style="left:408.20px;top:489.00px;font-size:8.9px;line-height:12px;font-weight:400;color:#222;width:86px;overflow:hidden;-webkit-text-stroke:0.15px #222">Shift Warehouse Pagi</div>
<div class="a" style="left:508.50px;top:489.00px;font-size:8.78px;line-height:12px;font-weight:400;color:#222;-webkit-text-stroke:0.15px #222">08.00 WIB</div>
<div class="a" style="left:582.00px;top:489.00px;font-size:8.78px;line-height:12px;font-weight:400;color:#222;-webkit-text-stroke:0.15px #222">18.00 WIB</div>
<div class="a" style="left:656.10px;top:489.00px;font-size:8.78px;line-height:12px;font-weight:400;color:#222;-webkit-text-stroke:0.15px #222">12.00 WIB</div>
<div class="a" style="left:730.30px;top:489.00px;font-size:8.78px;line-height:12px;font-weight:400;color:#222;-webkit-text-stroke:0.15px #222">13.00 WIB</div>
<div class="a" style="left:803.50px;top:489.00px;font-size:8.78px;line-height:12px;font-weight:400;color:#222;-webkit-text-stroke:0.15px #222">9H 14M</div>
<div class="a" style="left:877.70px;top:489.00px;font-size:8.82px;line-height:12px;font-weight:700;color:#6216d6;text-decoration:underline;text-decoration-color:#a98ae8">5 Checkpoints</div>
<div class="a" style="left:982.10px;top:489.00px;font-size:8.8px;line-height:12px;font-weight:400;color:#222;width:10.9px;overflow:hidden">8 Days</div>
<div class="a" style="left:142.00px;top:518.10px;width:850.00px;height:1.00px;background:#e8e8e8"></div>
<div class="a" style="left:151.00px;top:525.00px;font-size:9.0px;line-height:12px;font-weight:400;color:#6216d6;-webkit-text-stroke:0.2px #6216d6">Kelvin Fernando</div>
<div class="a" style="left:151.00px;top:541.00px;font-size:8.15px;line-height:12px;font-weight:400;color:#333;-webkit-text-stroke:0.12px #333">Bandung Branch</div>
<div class="a" style="left:151.00px;top:553.00px;font-size:8.15px;line-height:12px;font-weight:400;color:#333;-webkit-text-stroke:0.12px #333">0006 – Engineering</div>
<div class="a" style="left:298.00px;top:534.95px;width:93.00px;height:18.20px;border-radius:9px;background:#efefef"></div>
<div class="a" style="left:298.00px;top:539.00px;font-size:8.2px;line-height:12px;font-weight:400;color:#555;width:93px;text-align:center;-webkit-text-stroke:0.15px #555">No Issue</div>
<div class="a" style="left:408.20px;top:538.00px;font-size:8.9px;line-height:12px;font-weight:400;color:#222;width:86px;overflow:hidden;-webkit-text-stroke:0.15px #222">Shift Warehouse Pagi</div>
<div class="a" style="left:508.50px;top:538.00px;font-size:8.78px;line-height:12px;font-weight:400;color:#222;-webkit-text-stroke:0.15px #222">08.00 WIB</div>
<div class="a" style="left:582.00px;top:538.00px;font-size:8.78px;line-height:12px;font-weight:400;color:#222;-webkit-text-stroke:0.15px #222">18.00 WIB</div>
<div class="a" style="left:656.10px;top:538.00px;font-size:8.78px;line-height:12px;font-weight:400;color:#222;-webkit-text-stroke:0.15px #222">12.00 WIB</div>
<div class="a" style="left:730.30px;top:538.00px;font-size:8.78px;line-height:12px;font-weight:400;color:#222;-webkit-text-stroke:0.15px #222">13.00 WIB</div>
<div class="a" style="left:803.50px;top:538.00px;font-size:8.78px;line-height:12px;font-weight:400;color:#222;-webkit-text-stroke:0.15px #222">9H 14M</div>
<div class="a" style="left:877.70px;top:538.00px;font-size:8.82px;line-height:12px;font-weight:700;color:#6216d6;text-decoration:underline;text-decoration-color:#a98ae8">5 Checkpoints</div>
<div class="a" style="left:982.10px;top:538.00px;font-size:8.8px;line-height:12px;font-weight:400;color:#222;width:10.9px;overflow:hidden">8 Days</div>
<div class="a" style="left:142.00px;top:567.80px;width:850.00px;height:1.00px;background:#e8e8e8"></div>
<div class="a" style="left:151.00px;top:575.00px;font-size:9.0px;line-height:12px;font-weight:400;color:#6216d6;-webkit-text-stroke:0.2px #6216d6">Adristi Hanun</div>
<div class="a" style="left:151.00px;top:590.00px;font-size:8.15px;line-height:12px;font-weight:400;color:#333;-webkit-text-stroke:0.12px #333">Surabaya Branch</div>
<div class="a" style="left:151.00px;top:603.00px;font-size:8.15px;line-height:12px;font-weight:400;color:#333;-webkit-text-stroke:0.12px #333">0007 – CEO Office</div>
<div class="a" style="left:298.00px;top:584.65px;width:93.00px;height:18.20px;border-radius:9px;background:#e3f1ea"></div>
<div class="a" style="left:298.00px;top:589.00px;font-size:8.2px;line-height:12px;font-weight:400;color:#2f5d45;width:93px;text-align:center;-webkit-text-stroke:0.15px #2f5d45">On Time</div>
<div class="a" style="left:408.20px;top:588.00px;font-size:8.9px;line-height:12px;font-weight:400;color:#222;width:86px;overflow:hidden;-webkit-text-stroke:0.15px #222">Shift Warehouse Pagi</div>
<div class="a" style="left:508.50px;top:588.00px;font-size:8.76px;line-height:12px;font-weight:400;color:#a3a3a3;font-style:italic">N/A</div>
<div class="a" style="left:582.00px;top:588.00px;font-size:8.76px;line-height:12px;font-weight:400;color:#a3a3a3;font-style:italic">N/A</div>
<div class="a" style="left:656.10px;top:588.00px;font-size:8.76px;line-height:12px;font-weight:400;color:#a3a3a3;font-style:italic">N/A</div>
<div class="a" style="left:730.30px;top:588.00px;font-size:8.76px;line-height:12px;font-weight:400;color:#a3a3a3;font-style:italic">N/A</div>
<div class="a" style="left:803.50px;top:588.00px;font-size:8.76px;line-height:12px;font-weight:400;color:#a3a3a3;font-style:italic">N/A</div>
<div class="a" style="left:877.70px;top:588.00px;font-size:8.8px;line-height:12px;font-weight:400;color:#a3a3a3;font-style:italic;text-decoration:underline;text-decoration-color:#c8c8c8">Unpaid leave</div>
<div class="a" style="left:982.10px;top:588.00px;font-size:8.8px;line-height:12px;font-weight:400;color:#222;width:10.9px;overflow:hidden">8 Days</div>
<div class="a" style="left:142.00px;top:617.50px;width:850.00px;height:1.00px;background:#e8e8e8"></div>
<div class="a" style="left:151.00px;top:625.00px;font-size:9.0px;line-height:12px;font-weight:400;color:#6216d6;-webkit-text-stroke:0.2px #6216d6">Dea Seva Riska</div>
<div class="a" style="left:151.00px;top:640.00px;font-size:8.15px;line-height:12px;font-weight:400;color:#333;-webkit-text-stroke:0.12px #333">Bandung Branch</div>
<div class="a" style="left:151.00px;top:653.00px;font-size:8.15px;line-height:12px;font-weight:400;color:#333;-webkit-text-stroke:0.12px #333">0008 – Product</div>
<div class="a" style="left:298.00px;top:634.35px;width:93.00px;height:18.20px;border-radius:9px;background:#e5ecfd"></div>
<div class="a" style="left:298.00px;top:639.00px;font-size:8.2px;line-height:12px;font-weight:400;color:#2b40bd;width:93px;text-align:center;-webkit-text-stroke:0.15px #2b40bd">No Issue</div>
<div class="a" style="left:408.20px;top:638.00px;font-size:8.9px;line-height:12px;font-weight:400;color:#222;width:86px;overflow:hidden;-webkit-text-stroke:0.15px #222">Shift Warehouse Pagi</div>
<div class="a" style="left:508.50px;top:638.00px;font-size:8.78px;line-height:12px;font-weight:400;color:#222;-webkit-text-stroke:0.15px #222">08.00 WIB</div>
<div class="a" style="left:582.00px;top:638.00px;font-size:8.78px;line-height:12px;font-weight:400;color:#222;-webkit-text-stroke:0.15px #222">18.00 WIB</div>
<div class="a" style="left:656.10px;top:638.00px;font-size:8.78px;line-height:12px;font-weight:400;color:#222;-webkit-text-stroke:0.15px #222">12.00 WIB</div>
<div class="a" style="left:730.30px;top:638.00px;font-size:8.78px;line-height:12px;font-weight:400;color:#222;-webkit-text-stroke:0.15px #222">13.00 WIB</div>
<div class="a" style="left:803.50px;top:638.00px;font-size:8.78px;line-height:12px;font-weight:400;color:#222;-webkit-text-stroke:0.15px #222">9H 14M</div>
<div class="a" style="left:877.70px;top:638.00px;font-size:8.82px;line-height:12px;font-weight:700;color:#6216d6;text-decoration:underline;text-decoration-color:#a98ae8">5 Checkpoints</div>
<div class="a" style="left:982.10px;top:638.00px;font-size:8.8px;line-height:12px;font-weight:400;color:#222;width:10.9px;overflow:hidden">8 Days</div>
</div></body></html>
